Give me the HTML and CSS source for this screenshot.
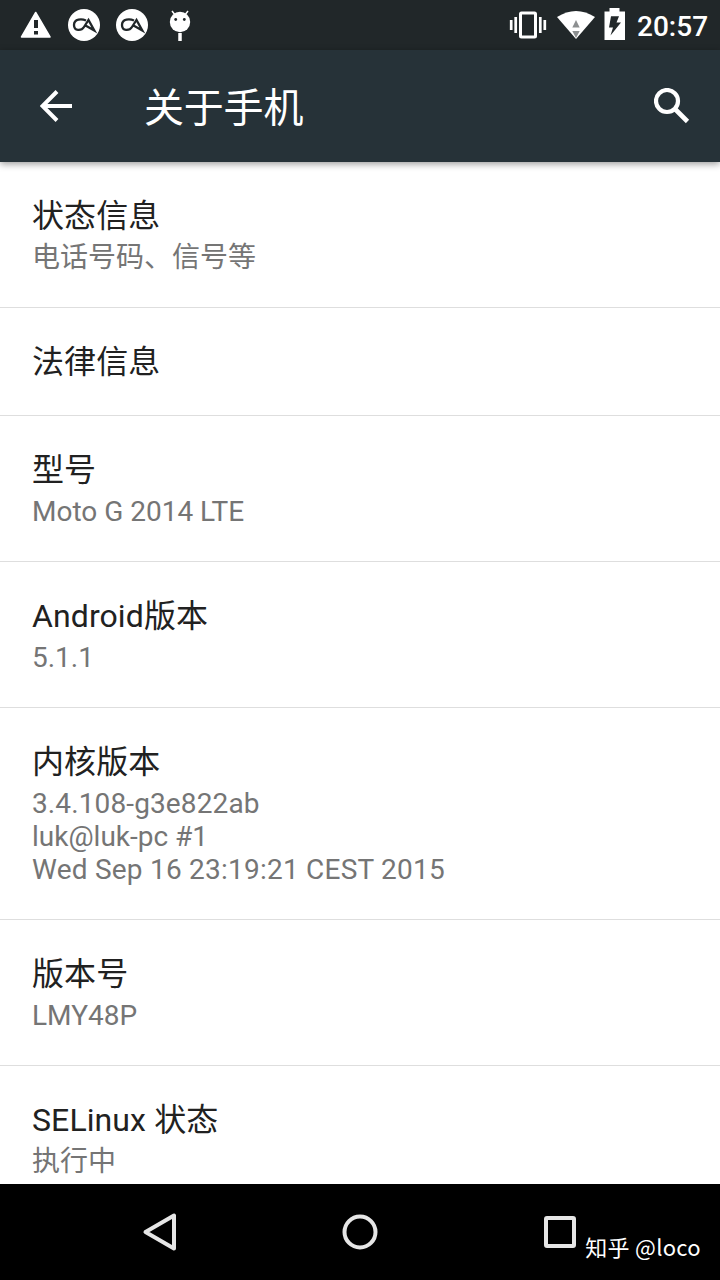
FILE: index.html
```html
<!DOCTYPE html>
<html lang="zh-CN">
<head>
    <meta charset="utf-8">
    <title>关于手机</title>
    <link rel="stylesheet" href="styles.css">
</head>
<body>
    <div class="screen">
        <div class="status-bar">
            <svg class="notifications" width="210" height="50" viewBox="0 0 210 50">
                <path d="M35.700 12.500L50 37H21.500Z" fill="#fff" stroke="#fff" stroke-width="1.500" stroke-linejoin="round"/>
                <path d="M36 20V28M36 31V34.500" stroke="#212729" stroke-width="4"/>
                <g id="ca">
                    <circle cx="84" cy="25" r="16" fill="#fff"/>
                    <path d="M86 20.500C82 18.800 74 18.500 74 25C74 31.500 81.500 31 84 27L88.500 20L94.300 30.500L85.500 25.500" fill="none" stroke="#212729" stroke-width="2.300"/>
                </g>
                <use href="#ca" x="48"/>
                <circle cx="180" cy="22" r="10.200" fill="#fff"/>
                <path d="M172 11L175.500 15.500M188 11L184.500 15.500" stroke="#fff" stroke-width="1.500"/>
                <path d="M180 33V41" stroke="#fff" stroke-width="3.500"/>
                <circle cx="175.700" cy="19.500" r="1.400" fill="#212729"/>
                <circle cx="184.300" cy="19.500" r="1.400" fill="#212729"/>
            </svg>
            <div class="system">
                <svg width="120" height="50" viewBox="508 0 120 50">
                    <rect x="520.500" y="13" width="15" height="24" rx="1" fill="none" stroke="#fff" stroke-width="3"/>
                    <path d="M511.200 20V30M515.700 17V33M540.300 17V33M544.800 20V30" stroke="#fff" stroke-width="2.700"/>
                    <path d="M557 17Q576 5 595 17L576 39Z" fill="#fff"/>
                    <path d="M572.300 27.500L576 20L579.700 27.500ZM572.300 31H579.700L576 38Z" fill="#8c8f90"/>
                    <path d="M604.500 11.500H609.500V8H619.500V11.500H625V40H604.500Z" fill="#fff"/>
                    <path d="M611 16.300H619L616.500 22.500H621L610.500 35.500L613 27.500H609Z" fill="#212729"/>
                </svg>
                <span class="clock">20:57</span>
            </div>
        </div>
        <div class="toolbar">
            <svg width="32" height="32" viewBox="0 0 32 32">
                <path d="M32 16H3M17 1.500L2.500 16L17 30.500" fill="none" stroke="#fff" stroke-width="4"/>
            </svg>
            <h1 class="title">关于手机</h1>
            <svg width="36" height="36" viewBox="0 0 36 36">
                <circle cx="13" cy="13" r="11" fill="none" stroke="#fff" stroke-width="4.200"/>
                <path d="M20.500 20.500L33.500 33.500" stroke="#fff" stroke-width="4.600"/>
            </svg>
        </div>
        <div class="list">
            <div class="row">
                <div class="name">状态信息</div>
                <div class="summary">电话号码、信号等</div>
            </div>
            <div class="row">
                <div class="name">法律信息</div>
            </div>
            <div class="row">
                <div class="name">型号</div>
                <div class="summary">Moto G 2014 LTE</div>
            </div>
            <div class="row">
                <div class="name">Android版本</div>
                <div class="summary">5.1.1</div>
            </div>
            <div class="row">
                <div class="name">内核版本</div>
                <div class="summary"><span class="build">3.4.108-g3e822ab</span><br>luk@luk-pc #1<br><span class="date">Wed Sep 16 23:19:21 CEST 2015</span></div>
            </div>
            <div class="row">
                <div class="name">版本号</div>
                <div class="summary">LMY48P</div>
            </div>
            <div class="row">
                <div class="name">SELinux 状态</div>
                <div class="summary">执行中</div>
            </div>
        </div>
        <div class="nav-bar">
            <svg width="40" height="40" viewBox="0 0 40 40">
                <path d="M34 3.500V36.500L5.500 20Z"/>
            </svg>
            <svg width="40" height="40" viewBox="0 0 40 40">
                <circle cx="20" cy="20" r="15.500"/>
            </svg>
            <svg width="40" height="40" viewBox="0 0 40 40">
                <rect x="6" y="6" width="28" height="28" rx="1"/>
            </svg>
            <span class="watermark">知乎 @loco</span>
        </div>
    </div>
</body>
</html>
```
FILE: styles.css
```css
body {
    margin: 0;
    background: #fff;
    font-family: Roboto, "Noto Sans CJK SC", sans-serif;
}

.screen {
    display: flex;
    flex-direction: column;
    height: 1280px;
    width: 720px;
    overflow: hidden;
}

svg {
    display: block;
    flex: none;
}

.status-bar {
    display: flex;
    justify-content: space-between;
    flex: none;
    height: 50px;
    background: #212729;
}

.system {
    display: flex;
    padding-right: 12px;
}

.clock {
    width: 71px;
    margin-left: 9px;
    font-size: 28px;
    font-weight: 500;
    line-height: 53px;
    color: #fff;
    white-space: nowrap;
}

.toolbar {
    display: flex;
    align-items: center;
    flex: none;
    box-sizing: border-box;
    height: 112px;
    padding: 0 30px 0 40px;
    background: #263238;
    box-shadow: 0 2px 7px rgba(0, 0, 0, 0.4);
    z-index: 1;
}

.title {
    flex: 1;
    margin: 0 0 0 72px;
    padding-top: 5px;
    font-size: 40px;
    font-weight: 400;
    line-height: 56px;
    letter-spacing: -0.2px;
    color: #fff;
}

.list {
    flex: 1;
    min-height: 0;
    overflow: hidden;
}

.row {
    padding: 33px 32px 32px;
    border-bottom: 1px solid #dedede;
}

.name {
    font-size: 32px;
    line-height: 42px;
    letter-spacing: 0.1px;
    color: #212121;
}

.summary {
    padding: 4px 0 1px;
    font-size: 28px;
    line-height: 33px;
    color: #757575;
}

.build {
    letter-spacing: 0.12px;
}

.date {
    letter-spacing: 0.23px;
}

.nav-bar {
    position: relative;
    display: flex;
    align-items: center;
    justify-content: center;
    gap: 160px;
    flex: none;
    height: 96px;
    background: #000;
}

.nav-bar svg {
    fill: none;
    stroke: #e6e6e6;
    stroke-width: 4;
    stroke-linejoin: round;
}

.watermark {
    position: absolute;
    right: 19px;
    bottom: 18px;
    font-family: "Noto Sans CJK SC", sans-serif;
    font-size: 22px;
    line-height: 32px;
    letter-spacing: 0.3px;
    color: #fff;
}
```
